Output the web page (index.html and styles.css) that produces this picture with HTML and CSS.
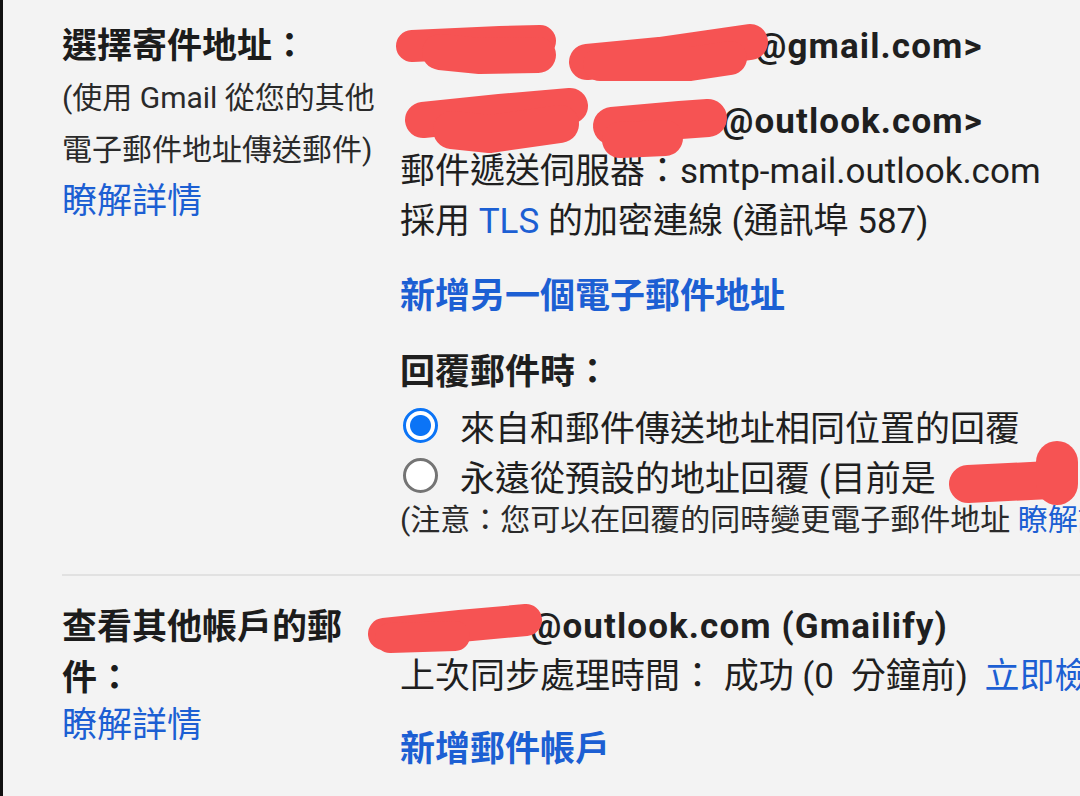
FILE: index.html
```html
<!DOCTYPE html>
<html lang="zh-Hant">
<head>
<meta charset="utf-8">
<title>帳戶設定</title>
<link rel="stylesheet" href="styles.css">
</head>
<body>
<main class="page">
  <section class="row row-first">
    <div class="label">
      <h2 class="label-title">選擇寄件地址：</h2>
      <p class="label-desc">(使用 Gmail 從您的其他<br>電子郵件地址傳送郵件)</p>
      <a class="link">瞭解詳情</a>
    </div>
    <div class="content">
      <div class="addr"><span class="mask m1">Nxxxxx Pxxxx &lt;nxxxxxxx</span>@gmail.com&gt;</div>
      <div class="addr addr-second"><span class="mask m2">Nxxxx &lt;sxxxxxxxx</span>@outlook.com&gt;</div>
      <div class="line">郵件遞送伺服器：smtp-mail.outlook.com</div>
      <div class="line">採用 <span class="blue">TLS</span> 的加密連線 (通訊埠 587)</div>
      <a class="action action-first">新增另一個電子郵件地址</a>
      <div class="subhead">回覆郵件時：</div>
      <div class="radio-row radio-row-first"><span class="radio checked"></span><span>來自和郵件傳送地址相同位置的回覆</span></div>
      <div class="radio-row"><span class="radio"></span><span>永遠從預設的地址回覆 (目前是 <span class="mask m3">nxxxxxxx@gmail.com)</span></span></div>
      <div class="note">(注意：您可以在回覆的同時變更電子郵件地址 <a class="link-inline">瞭解詳情</a>)</div>
    </div>
  </section>
  <hr class="divider">
  <section class="row row-second">
    <div class="label">
      <h2 class="label-title label-title-wrap">查看其他帳戶的郵<br>件：</h2>
      <a class="link link-second">瞭解詳情</a>
    </div>
    <div class="content">
      <div class="addr"><span class="mask m4">sxxxxxx</span>@outlook.com (Gmailify)</div>
      <div class="line">上次同步處理時間： 成功 (<span class="spaced">0 分鐘前) </span><a class="link-inline">立即檢查郵件</a></div>
      <a class="action action-second">新增郵件帳戶</a>
    </div>
  </section>
</main>
<svg class="scribbles" width="1080" height="796" viewBox="0 0 1080 796" aria-hidden="true">
  <g fill="none" stroke="#f65353" stroke-linecap="round" stroke-linejoin="round">
    <path stroke-width="32" d="M412 46 L500 42 L540 41"/>
    <path stroke-width="36" d="M440 52 L480 56 L538 55"/>
    <path stroke-width="36" d="M587 62 L660 55 L750 42"/>
    <path stroke-width="34" d="M600 64 L690 64 L730 58"/>
    <path stroke-width="36" d="M423 120 L500 112 L570 106"/>
    <path stroke-width="38" d="M452 130 L490 134 L560 124"/>
    <path stroke-width="38" d="M612 126 L680 120 L708 118"/>
    <path stroke-width="36" d="M620 140 L665 138"/>
    <path stroke-width="38" d="M968 484 L1050 480"/>
    <path stroke-width="42" d="M1057 462 L1057 484"/>
    <path stroke-width="32" d="M384 634 L460 626 L526 620"/>
    <path stroke-width="30" d="M390 638 L455 636"/>
  </g>
</svg>
</body>
</html>
```

FILE: styles.css
```css
html, body {
  margin: 0;
  padding: 0;
}

body {
  width: 1080px;
  height: 796px;
  overflow: hidden;
  background: #f3f3f3;
  color: #1f1f1f;
  font-family: Roboto, "Noto Sans CJK TC", "Noto Sans", sans-serif;
  position: relative;
}

.page {
  box-sizing: border-box;
  height: 796px;
  border-left: 3px solid #111;
  padding: 22px 0 0 59px;
}

.row {
  display: grid;
  grid-template-columns: 338px 1fr;
}

.row-second {
  margin-top: 26px;
}

.label-title {
  margin: 0;
  font-size: 35px;
  font-weight: 700;
  line-height: 50px;
  color: #1c1c1c;
  white-space: nowrap;
}

.label-title-wrap {
  line-height: 51px;
}

.label-desc {
  margin: 0;
  font-size: 30px;
  line-height: 52px;
  color: #2a2a2a;
  white-space: nowrap;
}

.link {
  display: block;
  font-size: 35px;
  line-height: 52px;
  color: #1c5fd3;
}

.link-second {
  line-height: 44px;
}

.content {
  white-space: nowrap;
  font-size: 35px;
}

.addr {
  font-weight: 700;
  line-height: 50px;
  letter-spacing: 1.1px;
}

.addr-second {
  margin-top: 25px;
}

.mask {
  display: inline-block;
  overflow: hidden;
  vertical-align: bottom;
  white-space: nowrap;
  color: transparent;
}

.m1 { width: 355px; }
.m2 { width: 322px; }
.m3 { width: 160px; }
.m4 { width: 130px; }

.line {
  line-height: 50px;
}

.spaced {
  word-spacing: 8px;
}

.blue {
  color: #1c5fd3;
}

.action {
  display: block;
  font-weight: 700;
  line-height: 50px;
  color: #1c5fd3;
}

.action-first {
  margin-top: 25px;
}

.action-second {
  margin-top: 23px;
}

.subhead {
  margin-top: 26px;
  font-weight: 700;
  line-height: 50px;
}

.radio-row {
  display: flex;
  align-items: center;
  gap: 22px;
  height: 50px;
  padding-left: 3px;
}

.radio-row-first {
  margin-top: 2px;
}

.radio {
  box-sizing: border-box;
  flex: none;
  width: 35px;
  height: 35px;
  border-radius: 50%;
  border: 3px solid #747474;
  background: #fff;
}

.radio.checked {
  border-color: #0b74f6;
  background: radial-gradient(circle, #0b74f6 0 10px, #fff 11px);
}

.note {
  font-size: 30px;
  line-height: 40px;
  color: #2a2a2a;
}

.link-inline {
  color: #1c5fd3;
}

.divider {
  margin: 34px 0 0 0;
  border: 0;
  border-top: 2px solid #e1e1e1;
  height: 0;
}

.scribbles {
  position: absolute;
  left: 0;
  top: 0;
  pointer-events: none;
}
```
